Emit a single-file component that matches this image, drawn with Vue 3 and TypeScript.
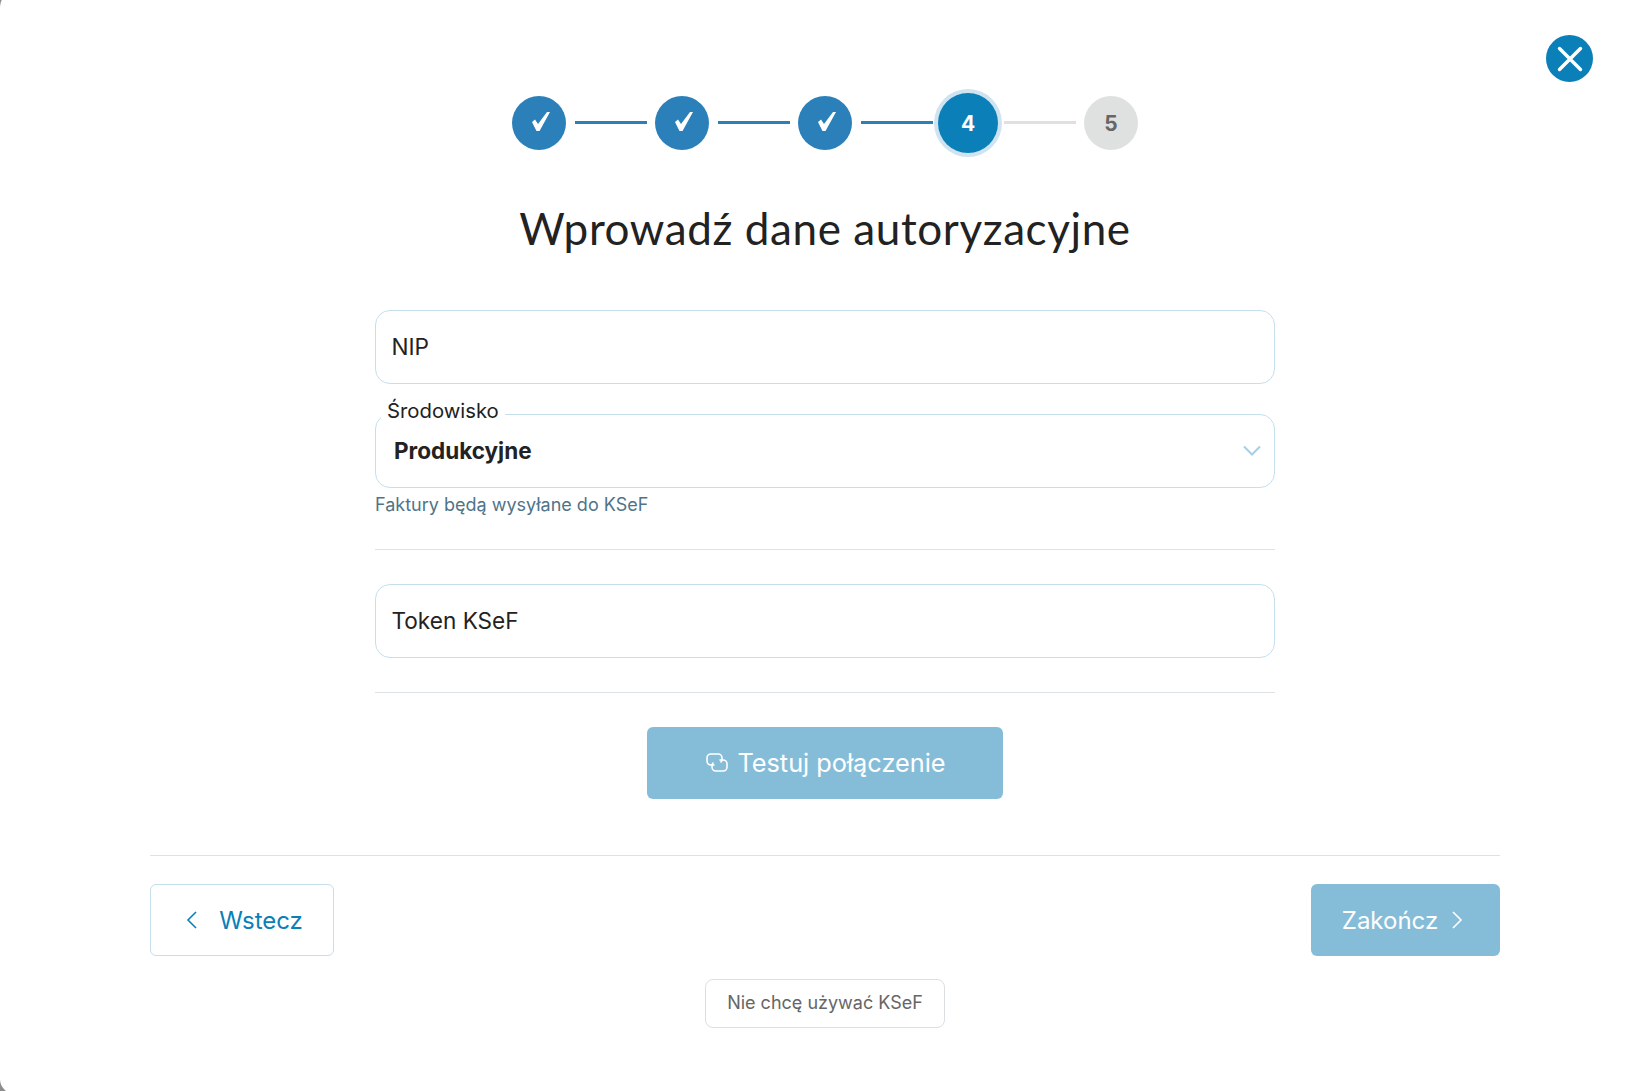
<script setup lang="ts">
interface Step { label: string; state: 'done' | 'active' | 'todo' }
const steps: Step[] = [
  { label: '', state: 'done' },
  { label: '', state: 'done' },
  { label: '', state: 'done' },
  { label: '4', state: 'active' },
  { label: '5', state: 'todo' },
]
</script>

<template>
  <div class="page">
    <div class="modal">
      <button class="close" aria-label="Zamknij">
        <svg width="26" height="26" viewBox="0 0 26 26" fill="none" stroke="#fff" stroke-width="3.4" stroke-linecap="round">
          <path d="M2.5 2.5 L23.5 23.5 M23.5 2.5 L2.5 23.5" />
        </svg>
      </button>

      <div class="stepper">
        <template v-for="(s, i) in steps" :key="i">
          <div class="circle" :class="s.state">
            <svg v-if="s.state === 'done'" class="check" width="18" height="19" viewBox="0 0 18 19" fill="#fff">
              <path d="M0 10 L3 7.5 L6 12 L15 0 L18 0 L7.5 19 L4.5 19 Z" />
            </svg>
            <template v-else>{{ s.label }}</template>
          </div>
          <div v-if="i < steps.length - 1" class="line" :class="{ grey: i === 3 }"></div>
        </template>
      </div>

      <h1 class="title">Wprowadź dane autoryzacyjne</h1>

      <div class="form">
        <input class="field" placeholder="NIP" />

        <div class="select">
          <span class="legend">Środowisko</span>
          <span class="value">Produkcyjne</span>
          <svg class="chev" width="18" height="11" viewBox="0 0 18 11" fill="none" stroke="#a6cfe5" stroke-width="2">
            <path d="M1 1.5 L9 9.5 L17 1.5" />
          </svg>
        </div>
        <p class="hint">Faktury będą wysyłane do KSeF</p>

        <hr class="rule first" />
        <input class="field" placeholder="Token KSeF" />
        <hr class="rule second" />

        <button class="btn solid test">
          <svg width="22" height="19" viewBox="0 0 22 19" fill="none" stroke="#fff" stroke-width="1.6" stroke-linecap="round" stroke-linejoin="round">
            <path d="M8 12 H5 A4 4 0 0 1 1 8 V5 A4 4 0 0 1 5 1 H12 A4 4 0 0 1 16 5 V6 A4 4 0 0 1 15 9" />
            <path d="M14 7 H17 A4 4 0 0 1 21 11 V14 A4 4 0 0 1 17 18 H10 A4 4 0 0 1 6 14 V13 A4 4 0 0 1 7 10" />
          </svg>
          <span>Testuj połączenie</span>
        </button>
      </div>

      <hr class="rule footer-rule" />

      <div class="footer">
        <button class="btn outline back">
          <svg width="11" height="18" viewBox="0 0 11 18" fill="none" stroke="#0b80b8" stroke-width="1.6">
            <path d="M10 1 L2 9 L10 17" />
          </svg>
          <span>Wstecz</span>
        </button>
        <button class="btn solid next">
          <span>Zakończ</span>
          <svg width="11" height="18" viewBox="0 0 11 18" fill="none" stroke="#fff" stroke-width="1.6">
            <path d="M1 1 L9 9 L1 17" />
          </svg>
        </button>
      </div>

      <button class="skip">Nie chcę używać KSeF</button>
    </div>
  </div>
</template>

<style>
html, body { margin: 0; background: #8c8c8c; overflow: hidden; }
</style>

<style scoped>
.page {
  width: 1643px;
  height: 1091px;
  overflow: hidden;
  font-family: Inter, "Liberation Sans", sans-serif;
  color: #222;
}
.modal {
  position: relative;
  box-sizing: border-box;
  width: 1650px;
  height: 1102px;
  margin-top: -8px;
  padding: 104px 150px 0;
  background: #fff;
  border-radius: 15px;
}
.close {
  position: absolute;
  top: 43px;
  left: 1546px;
  width: 47px;
  height: 47px;
  padding: 0;
  border: 0;
  border-radius: 50%;
  background: #0b80b8;
  display: flex;
  align-items: center;
  justify-content: center;
}
.stepper {
  display: flex;
  align-items: center;
  justify-content: center;
  height: 54px;
}
.circle {
  flex: none;
  box-sizing: border-box;
  width: 54px;
  height: 54px;
  border-radius: 50%;
  display: flex;
  align-items: center;
  justify-content: center;
  font-size: 21px;
  font-weight: 700;
}
.circle.done { background: #2b80ba; }
.check { margin: -3px 0 0 4px; }
.circle.active {
  width: 60px;
  height: 60px;
  margin: 0 -3px;
  background: #0b80b8;
  color: #fff;
  box-shadow: 0 0 0 4px #cfe3f0;
}
.circle.todo {
  background: #dfe1e1;
  color: #666;
}
.line {
  flex: none;
  width: 72px;
  height: 3px;
  margin: -1px 8.5px 0;
  background: #2b80ba;
}
.line.grey { background: #e0e0e0; }
.title {
  margin: 52px 0 0;
  height: 52px;
  text-align: center;
  font-family: Lato, sans-serif;
  font-weight: 400;
  font-size: 44px;
  line-height: 52px;
  letter-spacing: 0.6px;
  color: #222;
}
.form {
  width: 900px;
  margin: 56px auto 0;
  display: flex;
  flex-direction: column;
  align-items: center;
}
.field {
  box-sizing: border-box;
  display: block;
  width: 100%;
  height: 74px;
  padding: 0 16px 2px 15.5px;
  border: 1px solid #c5dfec;
  border-radius: 15px;
  background: #fff;
  font-family: inherit;
  font-size: 22.6px;
  outline: none;
}
.field::placeholder { color: #222; opacity: 1; }
.select {
  position: relative;
  box-sizing: border-box;
  width: 100%;
  height: 74px;
  margin-top: 30px;
  padding: 0 18px 2px;
  border: 1px solid #c5dfec;
  border-radius: 15px;
  display: flex;
  align-items: center;
  justify-content: space-between;
}
.legend {
  position: absolute;
  left: 5px;
  top: -19.5px;
  padding: 0 6px;
  background: #fff;
  font-size: 20.3px;
  line-height: 30px;
}
.value { font-size: 22.5px; font-weight: 700; }
.chev { margin: 0 -5px 0 0; }
.hint {
  align-self: flex-start;
  margin: 5px 0 0;
  font-size: 18px;
  line-height: 24px;
  color: #4f7488;
}
.rule {
  width: 100%;
  height: 1px;
  margin: 0;
  border: 0;
  background: #dde2e5;
}
.rule.first { margin-top: 32px; }
.field + .rule.second { margin-top: 34px; }
.rule.first + .field { margin-top: 34px; }
.btn {
  box-sizing: border-box;
  height: 72px;
  border-radius: 6px;
  font-family: inherit;
  font-size: 24px;
  display: flex;
  align-items: center;
  justify-content: center;
}
.btn.solid {
  border: 0;
  background: #85bdd9;
  color: #fff;
}
.btn.outline {
  border: 1px solid #c5dfec;
  background: #fff;
  color: #0b80b8;
}
.test {
  width: 356px;
  margin-top: 34px;
  gap: 9px;
  font-size: 25.3px;
  padding: 0 0 2px 2px;
}
.footer-rule { margin-top: 56px; }
.footer {
  display: flex;
  justify-content: space-between;
  margin-top: 28px;
}
.back { width: 184px; gap: 22px; padding: 0 0 0 5px; }
.next { width: 189px; gap: 14px; padding: 0 6px 0 0; }
.skip {
  display: block;
  box-sizing: border-box;
  width: 240px;
  height: 49px;
  margin: 23px auto 0;
  padding: 0 0 2px;
  border: 1px solid #dcdfe1;
  border-radius: 8px;
  background: #fff;
  font-family: inherit;
  font-size: 18px;
  color: #666;
}
</style>
